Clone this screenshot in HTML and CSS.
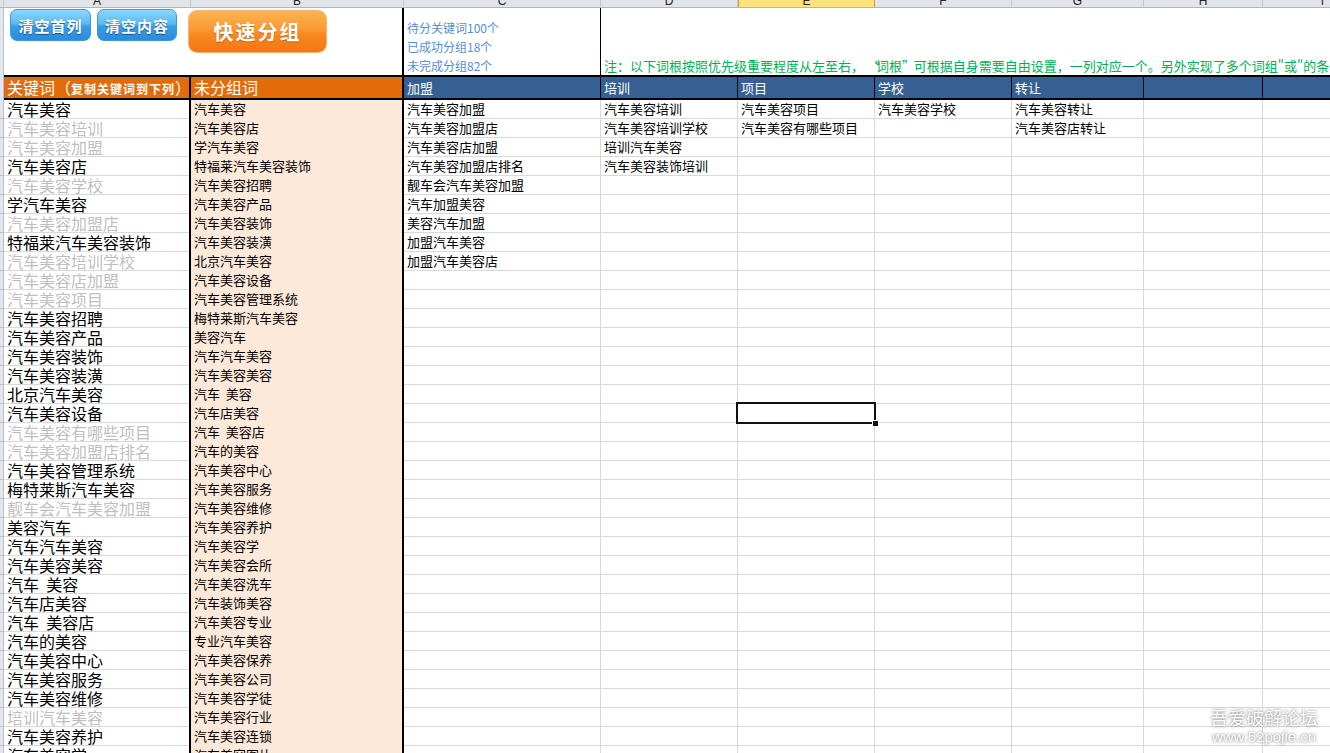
FILE: index.html
```html
<!DOCTYPE html>
<html lang="zh-CN">
<head>
<meta charset="utf-8">
<title>关键词分组</title>
<link rel="stylesheet" href="styles.css">
</head>
<body>
<div class="sheet">
  <div class="line colhead">
    <div class="corner"></div>
    <div class="ch ca"><span>A</span></div>
    <div class="ch cb"><span>B</span></div>
    <div class="ch cc"><span>C</span></div>
    <div class="ch cd"><span>D</span></div>
    <div class="ch ce sel"><span>E</span></div>
    <div class="ch cf"><span>F</span></div>
    <div class="ch cg"><span>G</span></div>
    <div class="ch cx"><span>H</span></div>
    <div class="ch ci"><span>I</span></div>
  </div>

  <div class="line row1">
    <div class="rh"></div>
    <div class="tools">
      <div class="btn blue">清空首列</div>
      <div class="btn blue second">清空内容</div>
      <div class="btn orange">快速分组</div>
    </div>
    <div class="stats cc">
      <div>待分关键词100个</div>
      <div>已成功分组18个</div>
      <div>未完成分组82个</div>
    </div>
    <div class="note">注：以下词根按照优先级重要程度从左至右， <span class="q">“</span>词根<span class="q">”</span> 可根据自身需要自由设置，一列对应一个。另外实现了多个词组"或"的条件匹配</div>
  </div>

  <div class="line hrow">
    <div class="rh"></div>
    <div class="h o ca">关键词（<b>复制关键词到下列</b>）</div>
    <div class="h o cb">未分组词</div>
    <div class="h bl cc">加盟</div>
    <div class="h bl cd">培训</div>
    <div class="h bl ce">项目</div>
    <div class="h bl cf">学校</div>
    <div class="h bl cg">转让</div>
    <div class="h bl cx"></div>
    <div class="h bl ci"></div>
  </div>

  <div class="line body">
    <div class="rh rows"></div>
    <div class="col ca">
      <div class="c">汽车美容</div>
      <div class="c g">汽车美容培训</div>
      <div class="c g">汽车美容加盟</div>
      <div class="c">汽车美容店</div>
      <div class="c g">汽车美容学校</div>
      <div class="c">学汽车美容</div>
      <div class="c g">汽车美容加盟店</div>
      <div class="c">特福莱汽车美容装饰</div>
      <div class="c g">汽车美容培训学校</div>
      <div class="c g">汽车美容店加盟</div>
      <div class="c g">汽车美容项目</div>
      <div class="c">汽车美容招聘</div>
      <div class="c">汽车美容产品</div>
      <div class="c">汽车美容装饰</div>
      <div class="c">汽车美容装潢</div>
      <div class="c">北京汽车美容</div>
      <div class="c">汽车美容设备</div>
      <div class="c g">汽车美容有哪些项目</div>
      <div class="c g">汽车美容加盟店排名</div>
      <div class="c">汽车美容管理系统</div>
      <div class="c">梅特莱斯汽车美容</div>
      <div class="c g">靓车会汽车美容加盟</div>
      <div class="c">美容汽车</div>
      <div class="c">汽车汽车美容</div>
      <div class="c">汽车美容美容</div>
      <div class="c">汽车  美容</div>
      <div class="c">汽车店美容</div>
      <div class="c">汽车  美容店</div>
      <div class="c">汽车的美容</div>
      <div class="c">汽车美容中心</div>
      <div class="c">汽车美容服务</div>
      <div class="c">汽车美容维修</div>
      <div class="c g">培训汽车美容</div>
      <div class="c">汽车美容养护</div>
      <div class="c">汽车美容学</div>
    </div>
    <div class="col cb">
      <div class="c">汽车美容</div>
      <div class="c">汽车美容店</div>
      <div class="c">学汽车美容</div>
      <div class="c">特福莱汽车美容装饰</div>
      <div class="c">汽车美容招聘</div>
      <div class="c">汽车美容产品</div>
      <div class="c">汽车美容装饰</div>
      <div class="c">汽车美容装潢</div>
      <div class="c">北京汽车美容</div>
      <div class="c">汽车美容设备</div>
      <div class="c">汽车美容管理系统</div>
      <div class="c">梅特莱斯汽车美容</div>
      <div class="c">美容汽车</div>
      <div class="c">汽车汽车美容</div>
      <div class="c">汽车美容美容</div>
      <div class="c">汽车  美容</div>
      <div class="c">汽车店美容</div>
      <div class="c">汽车  美容店</div>
      <div class="c">汽车的美容</div>
      <div class="c">汽车美容中心</div>
      <div class="c">汽车美容服务</div>
      <div class="c">汽车美容维修</div>
      <div class="c">汽车美容养护</div>
      <div class="c">汽车美容学</div>
      <div class="c">汽车美容会所</div>
      <div class="c">汽车美容洗车</div>
      <div class="c">汽车装饰美容</div>
      <div class="c">汽车美容专业</div>
      <div class="c">专业汽车美容</div>
      <div class="c">汽车美容保养</div>
      <div class="c">汽车美容公司</div>
      <div class="c">汽车美容学徒</div>
      <div class="c">汽车美容行业</div>
      <div class="c">汽车美容连锁</div>
      <div class="c">汽车美容图片</div>
    </div>
    <div class="col cc">
      <div class="c">汽车美容加盟</div>
      <div class="c">汽车美容加盟店</div>
      <div class="c">汽车美容店加盟</div>
      <div class="c">汽车美容加盟店排名</div>
      <div class="c">靓车会汽车美容加盟</div>
      <div class="c">汽车加盟美容</div>
      <div class="c">美容汽车加盟</div>
      <div class="c">加盟汽车美容</div>
      <div class="c">加盟汽车美容店</div>
    </div>
    <div class="col cd">
      <div class="c">汽车美容培训</div>
      <div class="c">汽车美容培训学校</div>
      <div class="c">培训汽车美容</div>
      <div class="c">汽车美容装饰培训</div>
    </div>
    <div class="col ce">
      <div class="c">汽车美容项目</div>
      <div class="c">汽车美容有哪些项目</div>
      <div class="gap"></div>
      <div class="c sel"></div>
    </div>
    <div class="col cf">
      <div class="c">汽车美容学校</div>
    </div>
    <div class="col cg">
      <div class="c">汽车美容转让</div>
      <div class="c">汽车美容店转让</div>
    </div>
    <div class="col cx"></div>
    <div class="col ci"></div>
  </div>
</div>

<div class="wm">
  <div class="t1">吾爱破解论坛</div>
  <div class="t2">www.52pojie.cn</div>
</div>
</body>
</html>
```

FILE: styles.css
```css
* {
  box-sizing: border-box;
  margin: 0;
  padding: 0;
}

html, body {
  width: 1330px;
  height: 753px;
  overflow: hidden;
  background: #fff;
}

body {
  position: relative;
  font-family: "Noto Sans CJK SC", "Liberation Sans", sans-serif;
  color: #000;
}

.sheet {
  width: 1330px;
  display: flex;
  flex-direction: column;
}

.line {
  display: flex;
  flex-shrink: 0;
}

.line > * {
  flex-shrink: 0;
}

/* column widths */
.ca { width: 187px; }
.cb { width: 213px; }
.cc { width: 197px; }
.cd, .ce, .cf { width: 137px; }
.cg { width: 132px; }
.cx { width: 119px; }
.ci { width: 120px; }

/* row header strip (cut off at the left edge) */
.rh {
  width: 4px;
  background: #e3e6eb;
  border-right: 1px solid #b8bfc9;
}

/* column letters */
.colhead {
  height: 8px;
  background: #e1e4e9;
  border-bottom: 1px solid #aeb5bf;
}

.corner {
  width: 4px;
  height: 7px;
  background: #e1e4e9;
  border-right: 1px solid #c3c9d1;
}

.ch {
  height: 7px;
  overflow: hidden;
  border-right: 1px solid #c3c9d1;
  text-align: center;
  font: 12px/14px "Liberation Sans", sans-serif;
  color: #222;
}

.ch span {
  display: block;
  margin-top: -6px;
}

.ch.sel {
  background: #ffe37a;
  border-left: 1px solid #d49a44;
  border-right: 1px solid #d49a44;
}

/* row 1 : buttons, counters and note */
.row1 {
  height: 67px;
}

.tools {
  width: 400px;
  display: flex;
  align-items: flex-start;
  padding-left: 6px;
  border-right: 2px solid #000;
}

.btn {
  display: flex;
  align-items: center;
  justify-content: center;
  color: #fff;
  font-weight: 700;
  letter-spacing: 1px;
}

.btn.blue {
  width: 81px;
  height: 32px;
  margin-top: 1px;
  border-radius: 7px;
  border: 1px solid #3f98d9;
  background: linear-gradient(#8fd6f9 0%, #5cbaf0 45%, #379de6 55%, #2a8cdc 100%);
  font-size: 15px;
  text-shadow: 0 1px 1px rgba(0, 40, 90, 0.6);
}

.btn.blue.second {
  width: 80px;
  margin-left: 6px;
}

.btn.orange {
  width: 139px;
  height: 43px;
  margin-left: 11px;
  margin-top: 2px;
  border-radius: 9px;
  border: 1px solid #f9b66a;
  background: linear-gradient(#fdb352 0%, #fa9a33 45%, #f78720 60%, #f37612 100%);
  font-size: 20px;
  letter-spacing: 2px;
  text-shadow: 0 1px 1px rgba(150, 60, 0, 0.5);
}

.stats {
  display: flex;
  flex-direction: column;
  justify-content: flex-end;
  padding-left: 3px;
  border-right: 1px solid #000;
  font-size: 12px;
  line-height: 19px;
  color: #558ed5;
  white-space: nowrap;
}

.note {
  flex: 1 1 auto;
  display: flex;
  align-items: flex-end;
  padding-left: 3px;
  font-size: 13px;
  line-height: 19px;
  color: #00b050;
  white-space: pre;
  overflow: hidden;
}

.note .q {
  display: inline-block;
  width: 9px;
  text-align: center;
}

/* header row */
.hrow {
  height: 25px;
}

.h {
  height: 25px;
  border-top: 2px solid #000;
  border-bottom: 2px solid #000;
  padding-left: 3px;
  line-height: 21px;
  color: #fff;
  white-space: nowrap;
  overflow: hidden;
}

.h.o {
  background: #e26b0a;
  border-right: 2px solid #000;
  font-size: 16px;
}

.h.o b {
  font-size: 12px;
  font-weight: 700;
  letter-spacing: 1px;
}

.h.bl {
  background: #366092;
  border-right: 1px solid #000;
  font-size: 13px;
}

/* data area */
.body {
  height: 665px;
}

.rh.rows {
  background: repeating-linear-gradient(#e3e6eb 0 18px, #b8bfc9 18px 19px);
}

.col {
  background: repeating-linear-gradient(#fff 0 18px, #d9d9d9 18px 19px);
  border-right: 1px solid #d9d9d9;
}

.col.ca {
  border-right: 2px solid #000;
}

.col.cb {
  background: #fde9d9;
  border-right: 2px solid #000;
}

.c {
  height: 19px;
  line-height: 18px;
  padding-left: 3px;
  font-size: 13px;
  white-space: pre;
  overflow: hidden;
}

.col.ca .c {
  font-size: 16px;
  line-height: 19px;
}

.c.g {
  color: #bfbfbf;
}

.gap {
  height: 266px;
}

.c.sel {
  position: relative;
  overflow: visible;
}

.c.sel::before {
  content: "";
  position: absolute;
  left: -2px;
  top: -2px;
  right: -2px;
  bottom: -1px;
  border: 2px solid #111;
}

.c.sel::after {
  content: "";
  position: absolute;
  right: -4px;
  bottom: -3px;
  width: 5px;
  height: 5px;
  background: #111;
  box-shadow: 0 0 0 1px #fff;
}

/* forum watermark */
.wm {
  position: absolute;
  right: 10px;
  bottom: 7px;
  width: 112px;
  text-align: center;
  color: #fff;
  text-shadow: 0 0 2px rgba(0, 0, 0, 0.45), 0 0 4px rgba(0, 0, 0, 0.25);
}

.wm .t1 {
  font-size: 18px;
  line-height: 21px;
}

.wm .t2 {
  font: 15px/18px "Liberation Sans", sans-serif;
}
```
